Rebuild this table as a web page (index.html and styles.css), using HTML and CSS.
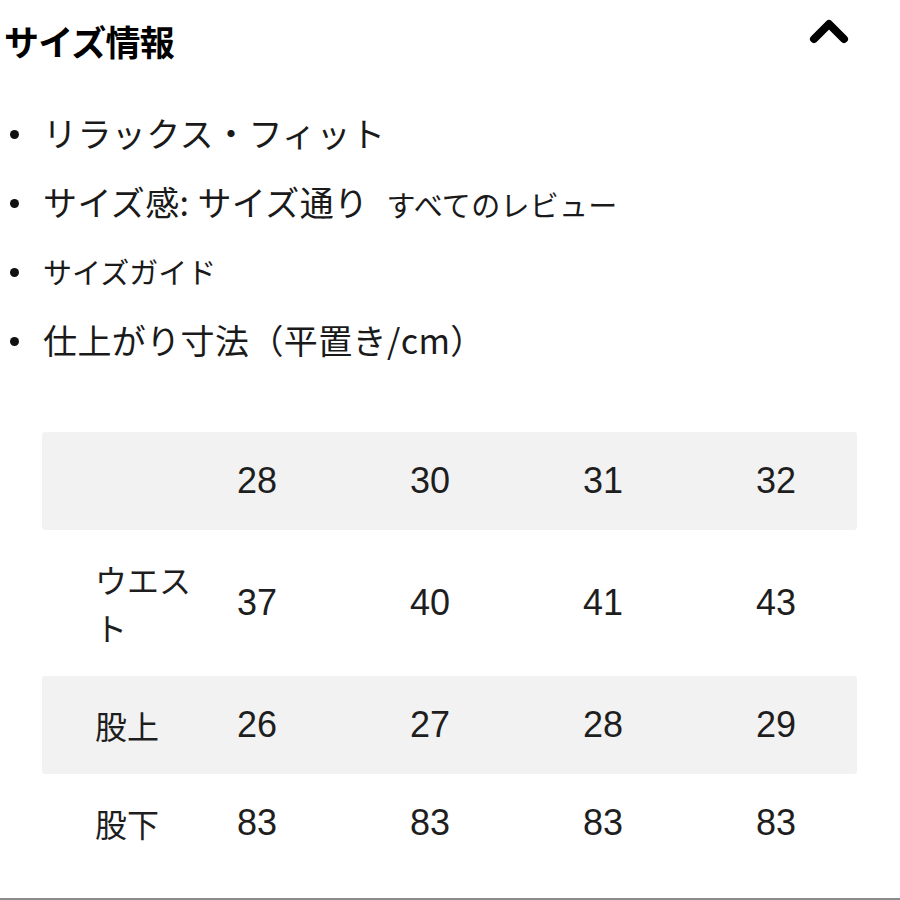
FILE: index.html
```html
<!DOCTYPE html>
<html lang="ja">
<head>
<meta charset="utf-8">
<link rel="stylesheet" href="styles.css">
</head>
<body>
<div class="page">
  <div class="header">
    <h2 class="title">サイズ情報</h2>
    <svg class="chevron" width="42" height="28" viewBox="0 0 42 28"><path d="M6 22 L21 7 L36 22" fill="none" stroke="#000" stroke-width="8" stroke-linecap="round" stroke-linejoin="round"/></svg>
  </div>
  <ul class="info">
    <li class="big">リラックス・フィット</li>
    <li class="big">サイズ感: サイズ通り <span class="note">すべてのレビュー</span></li>
    <li class="small">サイズガイド</li>
    <li class="big">仕上がり寸法（平置き/cm）</li>
  </ul>
  <div class="table">
    <div class="row shade">
      <div class="label"></div><div class="num">28</div><div class="num">30</div><div class="num">31</div><div class="num">32</div>
    </div>
    <div class="row tall">
      <div class="label">ウエスト</div><div class="num">37</div><div class="num">40</div><div class="num">41</div><div class="num">43</div>
    </div>
    <div class="row shade">
      <div class="label">股上</div><div class="num">26</div><div class="num">27</div><div class="num">28</div><div class="num">29</div>
    </div>
    <div class="row">
      <div class="label">股下</div><div class="num">83</div><div class="num">83</div><div class="num">83</div><div class="num">83</div>
    </div>
  </div>
  <div class="edge"></div>
</div>
</body>
</html>
```
FILE: styles.css
```css
html, body {
  margin: 0;
  padding: 0;
  background: #fff;
}
.page {
  width: 900px;
  height: 900px;
  overflow: hidden;
  font-family: "Noto Sans CJK JP", "Noto Sans", sans-serif;
  color: #111;
  display: flex;
  flex-direction: column;
}
.header {
  display: flex;
  justify-content: space-between;
  align-items: flex-start;
  padding: 16px 50px 0 4px;
}
.title {
  margin: 0;
  font-size: 35px;
  font-weight: 700;
  line-height: 50px;
  letter-spacing: -0.8px;
  color: #000;
}
.chevron {
  margin-top: 1px;
  display: block;
}
.info {
  list-style: none;
  margin: 32px 0 0 0;
  padding: 0 0 0 43px;
}
.info li {
  position: relative;
  height: 69px;
  display: flex;
  align-items: center;
  white-space: nowrap;
  color: #1a1a1a;
}
.info li::before {
  content: "";
  position: absolute;
  left: -33px;
  top: 50%;
  width: 9px;
  height: 9px;
  margin-top: -3px;
  border-radius: 50%;
  background: #111;
}
.info li.big {
  font-size: 34px;
  letter-spacing: 0.4px;
}
.info li.small {
  font-size: 29px;
}
.info .note {
  font-size: 29px;
  letter-spacing: 0.3px;
  margin-left: 18px;
  margin-top: 4px;
}
.table {
  margin: 58px 0 0 42px;
  width: 815px;
  font-family: "Noto Sans CJK JP", sans-serif;
  color: #1e1e1e;
}
.row {
  display: grid;
  grid-template-columns: 195px 173px 173px 173px 1fr;
  align-items: center;
  height: 98px;
}
.row.tall {
  height: 146px;
}
.row.shade {
  background: #f2f2f2;
  border-radius: 3px;
}
.label {
  padding: 0 42px 0 53px;
  font-size: 32px;
  line-height: 48px;
}
.num {
  font-family: "Liberation Sans", "Noto Sans", sans-serif;
  font-size: 36px;
  line-height: 48px;
}
.edge {
  margin-top: auto;
  height: 2px;
  background: #8c8c8c;
}
```
